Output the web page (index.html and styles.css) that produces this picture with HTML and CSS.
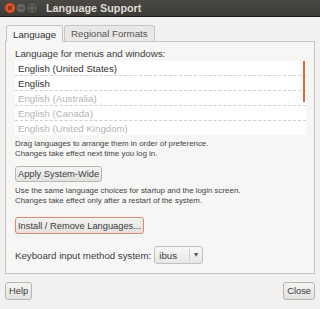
FILE: index.html
```html
<!DOCTYPE html>
<html lang="en">
<head>
  <meta charset="UTF-8">
  <title>Language Support</title>
  <link rel="stylesheet" href="styles.css">
</head>
<body>
  <div class="titlebar">
    <svg class="wm-buttons" width="40" height="16" viewBox="0 0 40 16">
      <circle cx="10" cy="8" r="5" fill="#e5582a" stroke="#a93d17" stroke-width="0.8"/>
      <path d="M8 6 L12 10 M12 6 L8 10" stroke="#6b2a10" stroke-width="1.2"/>
      <circle cx="21" cy="8" r="5" fill="#67665f" stroke="#3a3935" stroke-width="0.8"/>
      <path d="M18.5 8 H23.5" stroke="#3c3b37" stroke-width="1.2"/>
      <circle cx="32" cy="8" r="5" fill="#67665f" stroke="#3a3935" stroke-width="0.8"/>
      <rect x="29.8" y="5.8" width="4.4" height="4.4" fill="none" stroke="#3c3b37" stroke-width="1"/>
    </svg>
    <span class="title">Language Support</span>
  </div>

  <div class="window">
    <div class="tabs">
      <div class="tab active">Language</div>
      <div class="tab">Regional Formats</div>
    </div>

    <div class="panel">
      <div class="label">Language for menus and windows:</div>
      <div class="lang-list">
        <div class="row">English (United States)</div>
        <div class="row">English</div>
        <div class="row dim">English (Australia)</div>
        <div class="row dim">English (Canada)</div>
        <div class="row dim">English (United Kingdom)</div>
        <div class="scroll"></div>
      </div>
      <div class="note">Drag languages to arrange them in order of preference.<br>Changes take effect next time you log in.</div>
      <button class="btn apply">Apply System-Wide</button>
      <div class="note">Use the same language choices for startup and the login screen.<br>Changes take effect only after a restart of the system.</div>
      <button class="btn install">Install / Remove Languages...</button>
      <div class="kb-row">
        <span>Keyboard input method system:</span>
        <div class="combo">
          <span class="combo-text">ibus</span>
          <span class="combo-arrow">&#9662;</span>
        </div>
      </div>
    </div>

    <div class="footer">
      <button class="btn small">Help</button>
      <button class="btn small">Close</button>
    </div>
  </div>
</body>
</html>
```

FILE: styles.css
```css
body { margin: 0; background: #f2f1f0; font-family: "Liberation Sans", sans-serif; font-size: 9.7px; color: #3c3c3c; width: 320px; height: 309px; overflow: hidden; }
.titlebar { height: 16px; border-bottom: 1px solid #1c1c1a; background: linear-gradient(#4a4944, #3c3b37); display: flex; align-items: center; }
.wm-buttons { display: block; }
.title { margin-left: 6px; color: #dfdbd2; font-weight: bold; font-size: 10.8px; }
.window { padding: 0 5px; }
.tabs { display: flex; align-items: flex-end; height: 24px; padding-left: 1px; }
.tab { height: 15px; line-height: 15px; padding: 0 6px; border: 1px solid #c6c5c3; border-bottom: none; border-radius: 3px 3px 0 0; background: #e9e8e7; margin-right: 1px; color: #555; }
.tab.active { height: 16px; line-height: 17px; background: #f6f6f5; margin-bottom: -1px; position: relative; color: #333; }
.panel { border: 1px solid #c6c5c3; background: #f6f6f5; padding: 6px 8px 8px 9px; height: 217px; }
.label { line-height: 12px; margin-bottom: 1px; }
.lang-list { background: #fff; position: relative; }
.row { height: 14px; line-height: 15px; padding-left: 3px; border-bottom: 1px dashed #d0d0d0; color: #333; }
.row:nth-child(5) { border-bottom: none; }
.row.dim { color: #b5b5b5; }
.scroll { position: absolute; right: 1px; top: 0; width: 2px; height: 41px; background: #e8662e; }
.note { font-size: 7.9px; line-height: 10px; margin-top: 4px; color: #444; }
.btn { display: block; white-space: nowrap; font-family: inherit; font-size: 9.3px; color: #3c3c3c; background: linear-gradient(#f4f4f3, #e3e2e0); border: 1px solid #b6b5b2; border-radius: 3px; padding: 0 2px; }
.apply { height: 16px; margin-top: 7px; }
.install { height: 17px; margin-top: 11px; border-color: #e9866a; }
.kb-row { display: flex; align-items: center; margin-top: 12px; }
.combo { margin-left: 3px; height: 16px; width: 47px; border: 1px solid #c2c1bf; border-radius: 3px; background: linear-gradient(#f7f7f6, #e8e7e6); display: flex; align-items: center; }
.combo-text { flex: 1; padding-left: 4px; }
.combo-arrow { width: 12px; border-left: 1px solid #cfcecc; height: 12px; line-height: 12px; text-align: center; font-size: 8px; color: #555; }
.footer { display: flex; justify-content: space-between; margin-top: 8px; }
.small { height: 18px; padding: 0 3px; }
```
